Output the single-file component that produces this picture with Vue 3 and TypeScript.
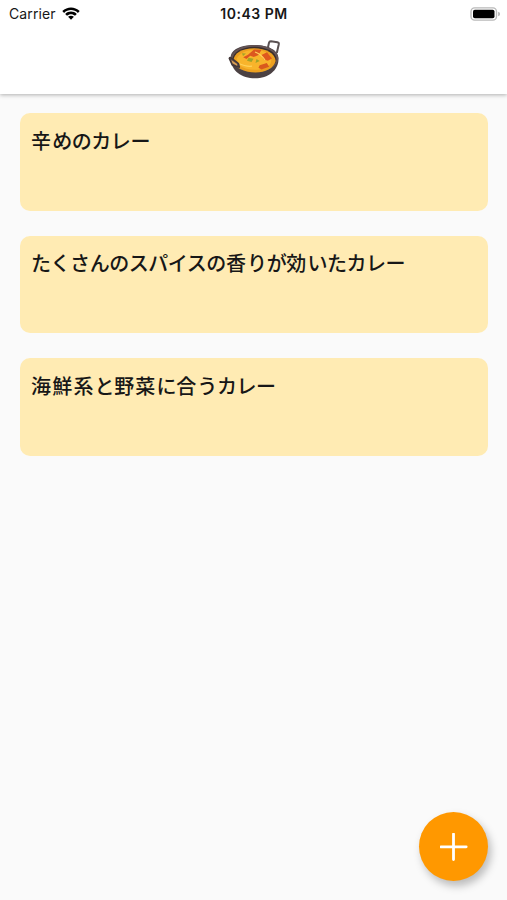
<script setup lang="ts">
interface Curry {
  id: number
  title: string
}

interface Run {
  text: string
  kanji: boolean
}

const curries: Curry[] = [
  { id: 1, title: '辛めのカレー' },
  { id: 2, title: 'たくさんのスパイスの香りが効いたカレー' },
  { id: 3, title: '海鮮系と野菜に合うカレー' },
]

// Kana are set a little tighter than kanji, so titles are split by script.
function runs(title: string): Run[] {
  return (title.match(/[一-龠]+|[^一-龠]+/g) ?? []).map((text) => ({
    text,
    kanji: /[一-龠]/.test(text),
  }))
}
</script>

<template>
  <div class="screen">
    <header class="header">
      <div class="status">
        <div class="carrier">
          <span>Carrier</span>
          <svg class="wifi" viewBox="0 0 18 13" aria-hidden="true">
            <path d="M0.3 4.1C5.2-.8 12.8-.8 17.7 4.1L15.9 5.9C12 2.1 6 2.1 2.1 5.9Z" />
            <path d="M3.2 7C6.5 3.8 11.5 3.8 14.8 7L13 8.8C10.7 6.7 7.3 6.7 5 8.8Z" />
            <path d="M6.1 9.8C7.8 8.3 10.2 8.3 11.9 9.8L9 12.7Z" />
          </svg>
        </div>
        <span class="time">10:43 PM</span>
        <svg class="battery" viewBox="0 0 31 14" aria-hidden="true">
          <rect x="1" y="0.9" width="25.5" height="12.2" rx="3.6" fill="#fff" stroke="#b9b9b9" stroke-width="1.4" />
          <rect x="3" y="2.8" width="21.5" height="8.4" rx="1.8" fill="#000" />
          <path d="M28.2 4.8Q30 5.3 30 7T28.2 9.2Z" fill="#b0b0b0" />
        </svg>
      </div>
      <div class="logo">
        <svg viewBox="0 0 54 42" aria-hidden="true">
          <path d="M40.5 10.5L42 3.7Q42.4 2.1 44 2.2L50.4 3.2Q52.1 3.6 51.8 5.2L49.8 14" fill="none" stroke="#5a5152" stroke-width="2" />
          <path d="M3.6 19C3.6 10 14 6 27.5 6S51.5 11 51.5 20C51.5 31.5 41 39.3 28 39.3C14.5 39.3 4 32 3.6 19Z" fill="#4b4143" />
          <ellipse cx="27.5" cy="19.5" rx="23.7" ry="13.4" fill="#645455" />
          <ellipse cx="27.5" cy="20.2" rx="21.9" ry="12.5" fill="#3a2e2d" />
          <path d="M6.4 22C6.4 14 15 9.2 27 9.2S48 14 48.7 22C46.5 29.5 38.5 33.4 28.5 33.5C18 33.5 8.5 29.5 6.4 22Z" fill="#eca020" />
          <path d="M9.5 20C13 12.5 23 9.9 34 11.6C43.5 13.5 46.5 21 42.5 26C36 32.5 20 32 12.5 26.5Z" fill="#f8b42b" />
          <path d="M21 15.7L27 10.5L34.5 10.8L31.5 16L26.8 18L23.2 16.8L19.5 20L16.2 18.3Z" fill="#dc571f" />
          <path d="M34.5 16L40 13.2L45 19.5L40.8 21.7L36.8 20.6Z" fill="#df591d" />
          <path d="M32.6 26.2L39.8 24L42.2 27.8L34.5 30.4L31.5 28.8Z" fill="#d95a1d" />
          <path d="M21.5 18.8L26.5 19.8L24.5 23L20 21.8ZM29.5 20L32.7 22L28.5 24ZM15 14.2L19 14.5L16 17Z" fill="#a2a328" />
          <path d="M11 24Q19 28 25 27.2M28 13Q34 15 38 21" fill="none" stroke="#ffd25c" stroke-width="1.2" />
          <path d="M2.3 19.4Q3 17.9 4.5 19.2L11.5 24.5L12.3 28.2L5.2 26Z" fill="#57494a" stroke="#423738" stroke-width="1.5" stroke-linejoin="round" />
          <path d="M4.3 20.9L10.1 25V26.7L5.5 24.3Z" fill="#dda052" />
        </svg>
      </div>
    </header>

    <main class="list">
      <article v-for="curry in curries" :key="curry.id" class="card">
        <h2 class="title"><span v-for="(run, i) in runs(curry.title)" :key="i" :class="run.kanji ? 'kanji' : 'kana'">{{ run.text }}</span></h2>
      </article>
    </main>

    <button class="add" type="button" aria-label="追加">
      <svg viewBox="0 0 28 28" aria-hidden="true">
        <path d="M13.5 1V26.5M1 13.8H26.2" fill="none" stroke="#fff" stroke-width="2.8" stroke-linecap="round" />
      </svg>
    </button>
  </div>
</template>

<style>
body {
  margin: 0;
  background: #fafafa;
}
</style>

<style scoped>
.screen {
  position: relative;
  box-sizing: border-box;
  height: 900px;
  overflow: hidden;
  background: #fafafa;
  font-family: Inter, "Noto Sans CJK JP", sans-serif;
  color: #171717;
}

.header {
  height: 94px;
  background: #fff;
  box-shadow: 0 1px 4px rgba(0, 0, 0, 0.3);
}

.status {
  display: grid;
  grid-template-columns: 1fr auto 1fr;
  align-items: center;
  height: 27px;
  padding: 0 6px 0 9px;
  font-size: 14px;
  line-height: 27px;
}

.carrier {
  display: flex;
  align-items: center;
  gap: 6px;
  letter-spacing: 0.12px;
}

.wifi {
  width: 18px;
  height: 13px;
  fill: #000;
}

.time {
  margin-right: 2px;
  font-weight: 600;
  letter-spacing: 0.5px;
}

.battery {
  justify-self: end;
  width: 31px;
  height: 14px;
}

.logo {
  display: flex;
  justify-content: center;
  padding-top: 12px;
}

.logo svg {
  width: 54px;
  height: 42px;
}

.list {
  display: flex;
  flex-direction: column;
  gap: 25px;
  padding: 19px 19px 0 20px;
}

.card {
  box-sizing: border-box;
  height: 97.5px;
  padding: 11.5px 11px;
  border-radius: 10px;
  background: #ffebb3;
}

.title {
  margin: 0;
  font-family: "Noto Sans CJK JP", sans-serif;
  font-size: 20px;
  font-weight: 500;
  line-height: 32px;
  white-space: nowrap;
}

.kanji {
  letter-spacing: 1.2px;
}

.kana {
  letter-spacing: -0.45px;
}

.add {
  position: absolute;
  right: 19px;
  bottom: 19px;
  display: grid;
  place-items: center;
  width: 69px;
  height: 69px;
  padding: 0;
  border: 0;
  border-radius: 50%;
  background: #ff9800;
  box-shadow: 3px 5px 9px rgba(0, 0, 0, 0.26);
}

.add svg {
  width: 28px;
  height: 28px;
}
</style>
